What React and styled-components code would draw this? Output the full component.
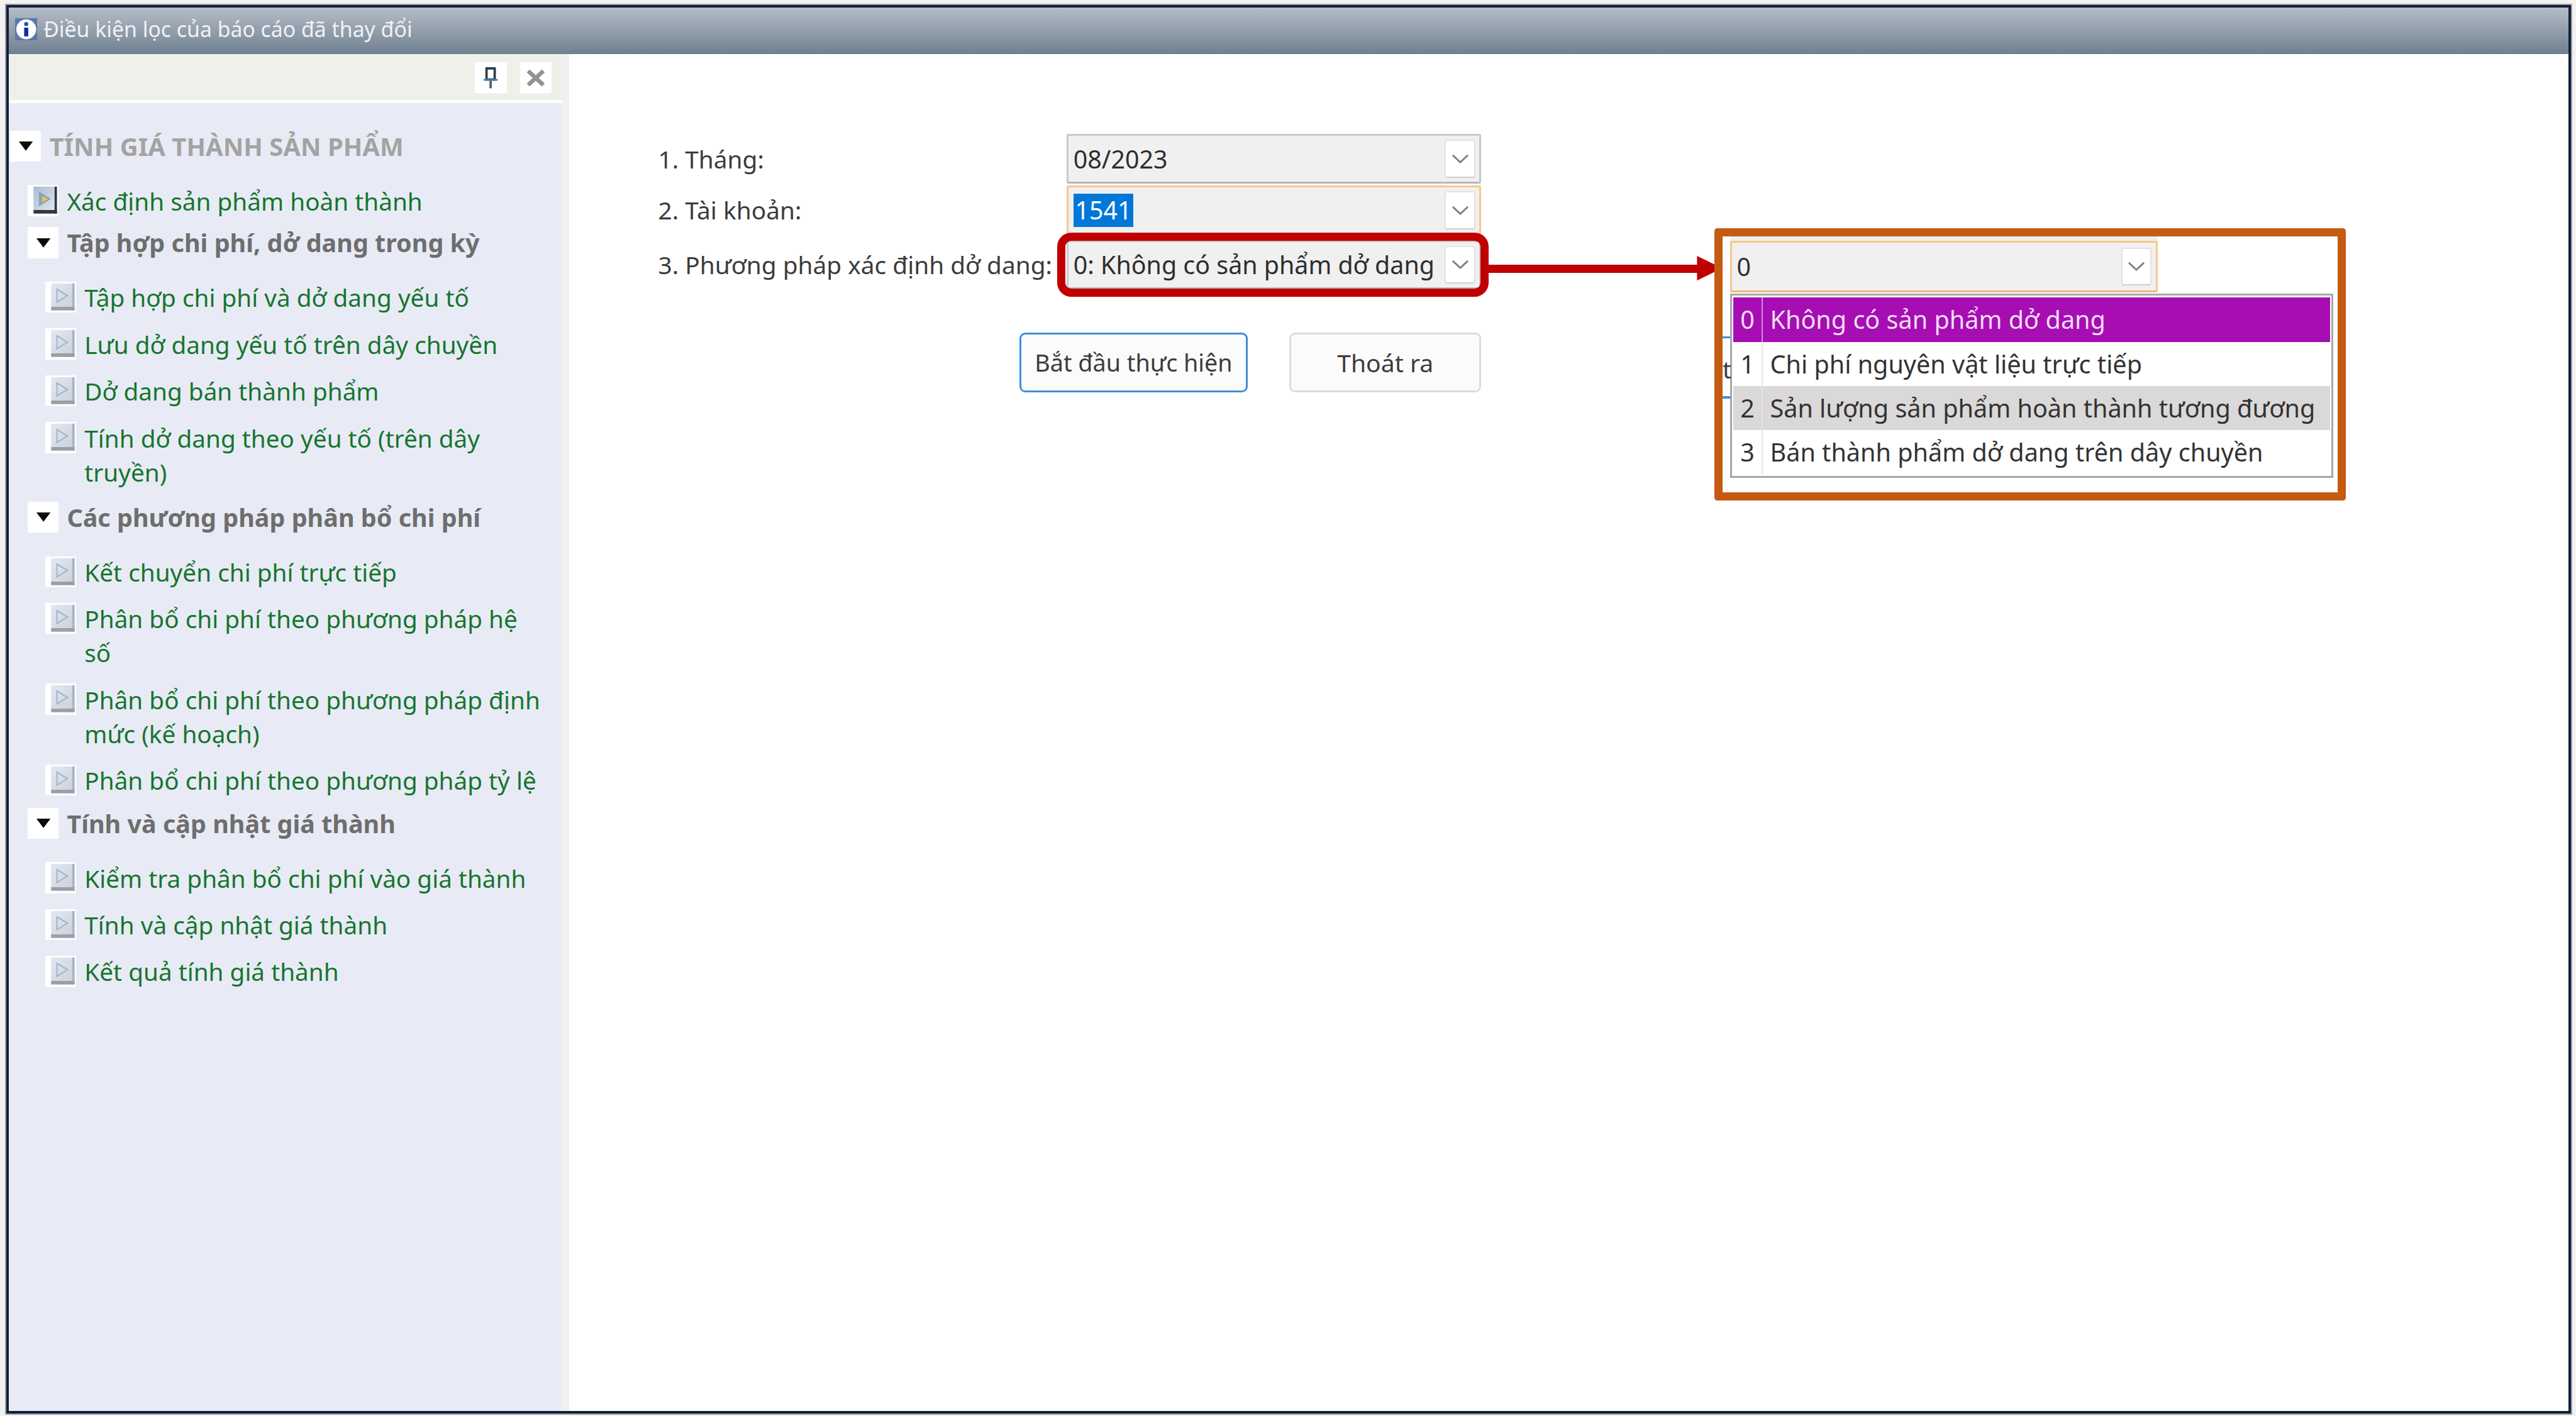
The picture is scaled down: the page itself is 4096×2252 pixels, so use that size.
import React from "react";
import styled, { createGlobalStyle } from "styled-components";

const GlobalStyle = createGlobalStyle`
  html, body {
    margin: 0;
    padding: 0;
    overflow: hidden;
    background: #f4f1f1;
  }
  * { box-sizing: border-box; }
`;

// all sizes below are the reference's pixels, zoom brings them to the window
const Screen = styled.div`
  zoom: 0.9309;
  width: 4400px;
  height: 2419px;
  padding: 9px 9px 4px 11px;
  font-family: "Noto Sans", "Open Sans", sans-serif;
  font-size: 41.7px;
`;

const Window = styled.div`
  display: flex;
  flex-direction: column;
  height: 100%;
  background: #fff;
  border: 5px solid #161f2e;
  box-shadow: 0 0 0 2px #8b9ab8;
`;

const TitleBar = styled.div`
  display: flex;
  align-items: center;
  gap: 11px;
  height: 79px;
  flex: none;
  padding: 0 0 6px 10px;
  color: #eef2f6;
  font-size: 36.3px;
  background: linear-gradient(#b6bcc6, #6f8090);
`;

const Body = styled.div`
  display: flex;
  flex: 1;
  min-height: 0;
`;

const Panel = styled.div`
  display: flex;
  flex-direction: column;
  width: 957px;
  flex: none;
  background: #e8ebf5;
  border-right: 13px solid #f0f0f0;
`;

const PanelHead = styled.div`
  display: flex;
  justify-content: flex-end;
  gap: 23px;
  height: 84px;
  padding: 14px 17px 0 0;
  background: #f0f0eb;
  border-bottom: 6px solid #fff;
`;

const HeadButton = styled.div`
  display: flex;
  align-items: center;
  justify-content: center;
  width: 54px;
  height: 53px;
  background: #fff;
`;

const Tree = styled.div`
  display: flex;
  flex-direction: column;
  padding: 47px 30px 0 2px;
`;

const TreeRow = styled.div`
  display: flex;
  align-items: center;
  gap: 14px;
  margin-left: ${(p) => p.$indent || 0}px;
  margin-top: ${(p) => p.$top || 0}px;
  height: 53px;
`;

const Toggle = styled.div`
  display: flex;
  align-items: center;
  justify-content: center;
  width: 53px;
  height: 53px;
  flex: none;
  background: #fff;
`;

const RootTitle = styled.div`
  color: #a3a3a3;
  font-size: 43px;
  font-weight: 700;
  white-space: nowrap;
`;

const GroupTitle = styled.div`
  color: #6e6e6e;
  font-size: 42.4px;
  font-weight: 700;
  white-space: nowrap;
`;

const Item = styled.div`
  display: flex;
  gap: 14px;
  margin-left: ${(p) => p.$indent}px;
  margin-top: ${(p) => p.$top || 22}px;
`;

const ItemIcon = styled.div`
  display: flex;
  width: 53px;
  height: 53px;
  flex: none;
  margin-top: 2px;
  background: #fff;
`;

const ItemText = styled.div`
  color: #17752f;
  font-size: 41.6px;
  line-height: 58px;
`;

const Main = styled.div`
  position: relative;
  flex: 1;
  padding: 137px 0 0 152px;
  color: #3c3c3c;
`;

const FormRow = styled.div`
  display: grid;
  grid-template-columns: 698px 708px;
  align-items: center;
  margin-top: ${(p) => p.$top || 0}px;
`;

const Combo = styled.div`
  display: flex;
  align-items: center;
  justify-content: space-between;
  width: ${(p) => p.$width || 708}px;
  height: ${(p) => p.$height || 84}px;
  padding: 0 7px 0 8px;
  color: #2e2e2e;
  font-size: 42.3px;
  white-space: nowrap;
  background: #f0f0f0;
  border: 4px solid ${(p) => (p.$focus ? "#f7c78c" : "#c6c8cc")};
  border-bottom-color: ${(p) => (p.$focus ? "#e8b77c" : "#b2b6be")};
  border-radius: 3px;
`;

const ComboArrow = styled.div`
  display: flex;
  align-items: center;
  justify-content: center;
  width: 52px;
  height: 65px;
  flex: none;
  background: #fff;
  border: 3px solid #e2e2e2;
  border-bottom-color: #cfcfcf;
  border-radius: 4px;
`;

const Selected = styled.span`
  display: inline-block;
  height: 57px;
  line-height: 57px;
  padding: 0 3px;
  color: #fff;
  background: #0078d7;
`;

const ButtonRow = styled.div`
  display: flex;
  gap: 71px;
  margin: 74px 0 0 617px;
`;

const Button = styled.div`
  display: flex;
  align-items: center;
  justify-content: center;
  width: ${(p) => p.$width}px;
  height: 102px;
  color: #3c3c3c;
  font-size: ${(p) => (p.$primary ? 40.5 : 42)}px;
  background: #fbfbfb;
  border: 4px solid ${(p) => (p.$primary ? "#3f8fd6" : "#dcdcdc")};
  border-radius: 10px;
`;

const RedBox = styled.div`
  position: absolute;
  left: 833px;
  top: 305px;
  width: 737px;
  height: 110px;
  border: 14px solid #c00000;
  border-radius: 24px;
`;

const Arrow = styled.svg`
  position: absolute;
  left: 1570px;
  top: 345px;
`;

const CalloutBox = styled.div`
  position: absolute;
  left: 1956px;
  top: 298px;
  width: 1079px;
  height: 465px;
  padding: 0 0 0 13px;
  background: #fff;
  border: 14px solid #c55a11;
  border-radius: 5px;
`;

const HiddenStrip = styled.div`
  width: 730px;
  height: 7px;
  background: #eeeeec;
`;

const Sliver = styled.div`
  position: absolute;
  left: 0;
  top: ${(p) => p.$top}px;
  width: 13px;
  height: 4px;
  background: #3f8fd6;
`;

const SliverText = styled.div`
  position: absolute;
  left: 0;
  top: 198px;
  color: #3c3c3c;
  line-height: 56px;
`;

const Dropdown = styled.div`
  width: 1030px;
  height: 315px;
  margin-top: 2px;
  padding: 4px 2px 2px;
  font-size: 42.5px;
  background: #fff;
  border: 4px solid #a6a6a6;
`;

const DropRow = styled.div`
  display: grid;
  grid-template-columns: 51px 1fr;
  height: 75.5px;
  color: ${(p) => (p.$picked ? "#f3def5" : "#333")};
  background: ${(p) => (p.$picked ? "#a60db3" : p.$hover ? "#dad8d8" : "#fff")};
`;

const DropCode = styled.div`
  display: flex;
  align-items: center;
  justify-content: center;
  border-right: 3px solid ${(p) => (p.$picked ? "#d28fd8" : "#e6e6e6")};
`;

const DropLabel = styled.div`
  display: flex;
  align-items: center;
  padding-left: 12px;
  white-space: nowrap;
`;

const Triangle = () => (
  <svg width="26" height="18" viewBox="0 0 26 18">
    <polygon points="1,1 25,1 13,17" fill="#0a0a0a" />
  </svg>
);

const DocIcon = ({ active }) => (
  <svg width="53" height="53" viewBox="0 0 53 53">
    <defs>
      <linearGradient id={active ? "docA" : "docB"} x1="0" y1="0" x2="1" y2="1">
        <stop offset="0" stopColor={active ? "#a9bbd2" : "#e4e8f0"} />
        <stop offset="1" stopColor={active ? "#e6eaf0" : "#c8cfdc"} />
      </linearGradient>
    </defs>
    <rect x="10" y="3" width="40" height="46" fill={`url(#${active ? "docA" : "docB"})`} />
    <rect x="46" y="3" width="4" height="46" fill={active ? "#2f3740" : "#a9b4c6"} />
    <rect x="10" y="43" width="40" height="6" fill={active ? "#2f3740" : "#9c9ea6"} />
    <polygon points="20,13 38,24 20,35" fill={active ? "#8ba2c2" : "none"} stroke={active ? "#8ba2c2" : "#9fb0c8"} strokeWidth="2" />
    {active && <polygon points="25,19 35,24 25,30" fill="#f3c832" />}
  </svg>
);

const InfoIcon = () => (
  <svg width="38" height="38" viewBox="0 0 38 38">
    <rect width="38" height="38" fill="#5678ad" />
    <circle cx="19" cy="19" r="17" fill="#fff" />
    <circle cx="19" cy="10" r="3.5" fill="#2b4fa8" />
    <rect x="15.5" y="16" width="7" height="15" fill="#10309a" />
  </svg>
);

const PinIcon = () => (
  <svg width="26" height="38" viewBox="0 0 26 38">
    <rect x="5" y="1" width="16" height="3" fill="#4a90d8" />
    <rect x="6" y="3" width="14" height="19" fill="none" stroke="#2c3a48" strokeWidth="4" />
    <rect x="1" y="21" width="24" height="3" fill="#3f7fb8" />
    <rect x="11" y="24" width="4" height="13" fill="#50606c" />
  </svg>
);

const CloseIcon = () => (
  <svg width="32" height="28" viewBox="0 0 32 28">
    <path d="M3 2 L29 26 M29 2 L3 26" stroke="#929292" strokeWidth="7" />
  </svg>
);

const Chevron = () => (
  <svg width="30" height="17" viewBox="0 0 30 17">
    <path d="M2 2 L15 14 L28 2" fill="none" stroke="#7f7f7f" strokeWidth="3" />
  </svg>
);

const groups = [
  {
    title: "Tập hợp chi phí, dở dang trong kỳ",
    top: 16,
    items: [
      "Tập hợp chi phí và dở dang yếu tố",
      "Lưu dở dang yếu tố trên dây chuyền",
      "Dở dang bán thành phẩm",
      "Tính dở dang theo yếu tố (trên dây truyền)",
    ],
  },
  {
    title: "Các phương pháp phân bổ chi phí",
    top: 22,
    items: [
      "Kết chuyển chi phí trực tiếp",
      "Phân bổ chi phí theo phương pháp hệ số",
      "Phân bổ chi phí theo phương pháp định mức (kế hoạch)",
      "Phân bổ chi phí theo phương pháp tỷ lệ",
    ],
  },
  {
    title: "Tính và cập nhật giá thành",
    top: 18,
    items: [
      "Kiểm tra phân bổ chi phí vào giá thành",
      "Tính và cập nhật giá thành",
      "Kết quả tính giá thành",
    ],
  },
];

const options = [
  "Không có sản phẩm dở dang",
  "Chi phí nguyên vật liệu trực tiếp",
  "Sản lượng sản phẩm hoàn thành tương đương",
  "Bán thành phẩm dở dang trên dây chuyền",
];

export default function App() {
  return (
    <Screen>
      <GlobalStyle />
      <Window>
        <TitleBar>
          <InfoIcon />
          Điều kiện lọc của báo cáo đã thay đổi
        </TitleBar>
        <Body>
          <Panel>
            <PanelHead>
              <HeadButton>
                <PinIcon />
              </HeadButton>
              <HeadButton>
                <CloseIcon />
              </HeadButton>
            </PanelHead>
            <Tree>
              <TreeRow>
                <Toggle>
                  <Triangle />
                </Toggle>
                <RootTitle>TÍNH GIÁ THÀNH SẢN PHẨM</RootTitle>
              </TreeRow>
              <Item $indent={30} $top={38}>
                <ItemIcon>
                  <DocIcon active />
                </ItemIcon>
                <ItemText>Xác định sản phẩm hoàn thành</ItemText>
              </Item>
              {groups.map((group) => (
                <React.Fragment key={group.title}>
                  <TreeRow $indent={30} $top={group.top}>
                    <Toggle>
                      <Triangle />
                    </Toggle>
                    <GroupTitle>{group.title}</GroupTitle>
                  </TreeRow>
                  {group.items.map((item, index) => (
                    <Item key={item} $indent={60} $top={index === 0 ? 38 : 22}>
                      <ItemIcon>
                        <DocIcon />
                      </ItemIcon>
                      <ItemText>{item}</ItemText>
                    </Item>
                  ))}
                </React.Fragment>
              ))}
            </Tree>
          </Panel>
          <Main>
            <FormRow>
              <div>1. Tháng:</div>
              <Combo>
                08/2023
                <ComboArrow>
                  <Chevron />
                </ComboArrow>
              </Combo>
            </FormRow>
            <FormRow $top={4}>
              <div>2. Tài khoản:</div>
              <Combo $focus>
                <Selected>1541</Selected>
                <ComboArrow>
                  <Chevron />
                </ComboArrow>
              </Combo>
            </FormRow>
            <FormRow $top={9}>
              <div>3. Phương pháp xác định dở dang:</div>
              <Combo>
                0: Không có sản phẩm dở dang
                <ComboArrow>
                  <Chevron />
                </ComboArrow>
              </Combo>
            </FormRow>
            <ButtonRow>
              <Button $primary $width={390}>
                Bắt đầu thực hiện
              </Button>
              <Button $width={328}>Thoát ra</Button>
            </ButtonRow>

            <RedBox />
            <Arrow width="400" height="42" viewBox="0 0 400 42">
              <rect x="0" y="15" width="360" height="14" fill="#c00000" />
              <polygon points="356,0 399,21 356,42" fill="#c00000" />
            </Arrow>
            <CalloutBox>
              <Sliver $top={170} />
              <SliverText>t</SliverText>
              <Sliver $top={273} />
              <HiddenStrip />
              <Combo $focus $width={730} $height={88}>
                0
                <ComboArrow>
                  <Chevron />
                </ComboArrow>
              </Combo>
              <Dropdown>
                {options.map((label, index) => (
                  <DropRow key={label} $picked={index === 0} $hover={index === 2}>
                    <DropCode $picked={index === 0}>{index}</DropCode>
                    <DropLabel>{label}</DropLabel>
                  </DropRow>
                ))}
              </Dropdown>
            </CalloutBox>
          </Main>
        </Body>
      </Window>
    </Screen>
  );
}
